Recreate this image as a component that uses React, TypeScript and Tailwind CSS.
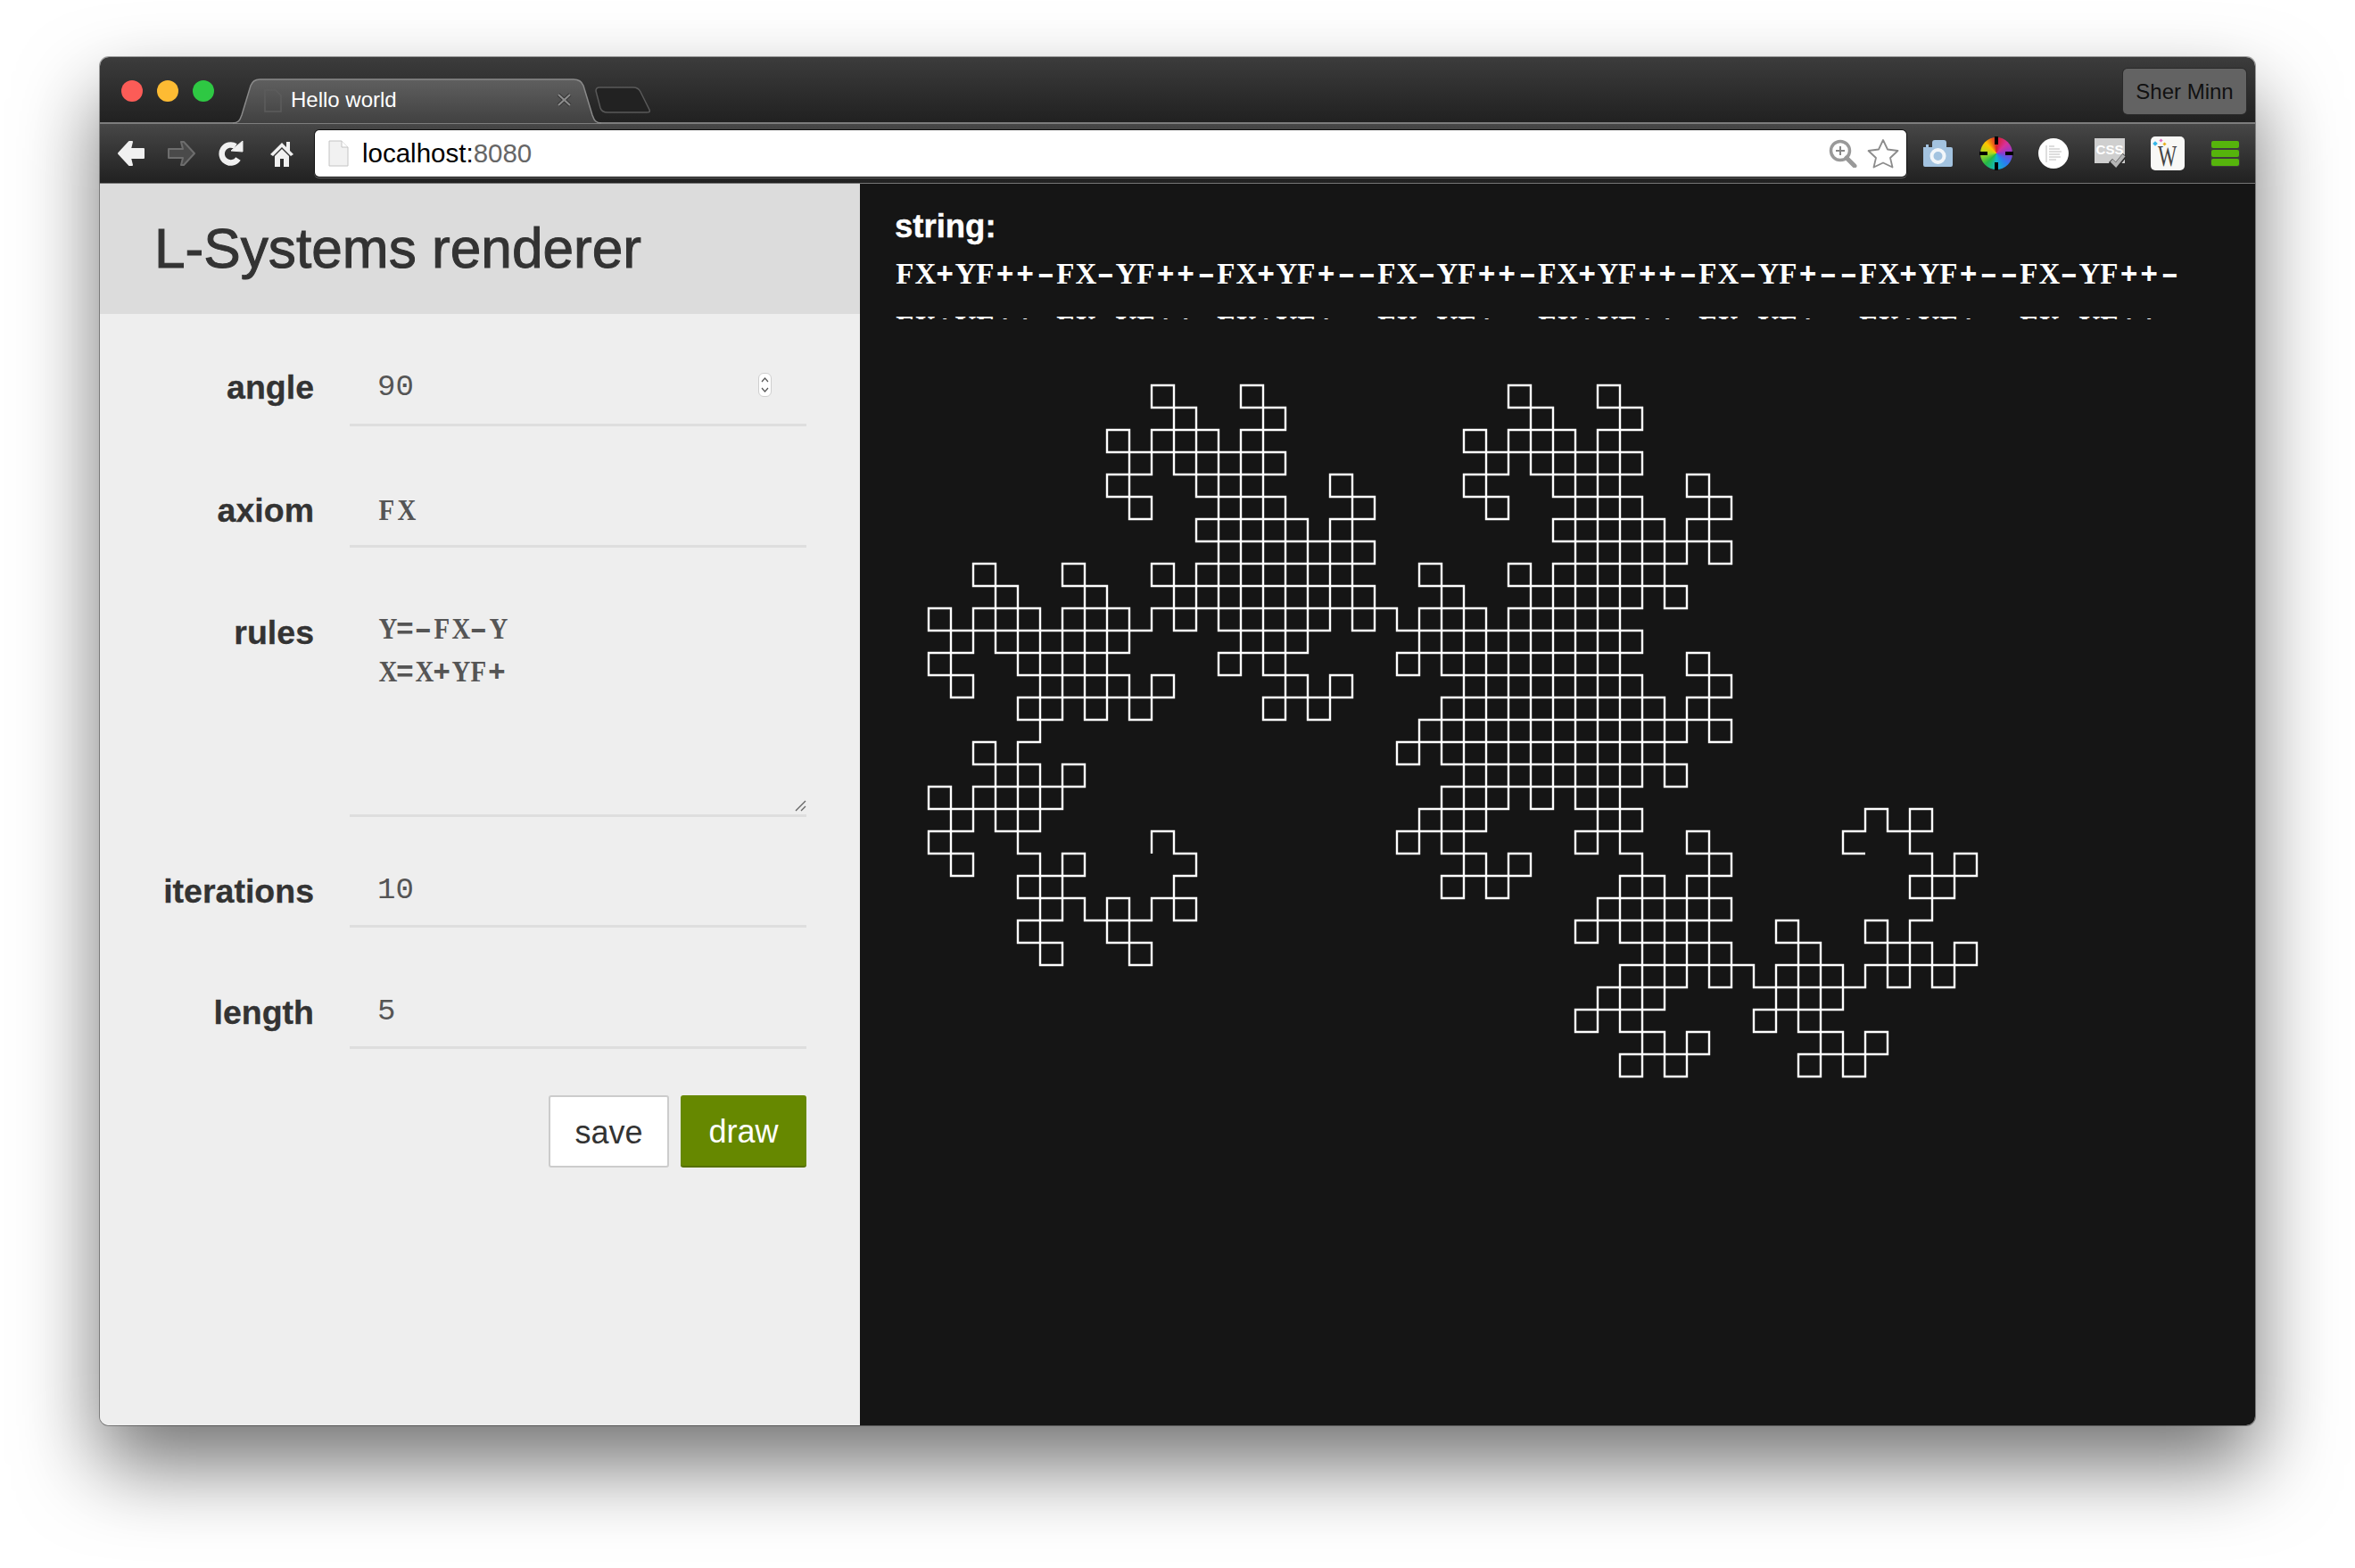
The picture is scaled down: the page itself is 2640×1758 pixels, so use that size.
import React from "react";

const SANS = "font-['Liberation_Sans',Arial,sans-serif]";
const SLAB = "font-['Liberation_Serif','Times_New_Roman',serif]";
const CODE = "font-['Liberation_Mono','Courier_New',monospace]";

function expand(iterations: number): string {
  let s = "FX";
  for (let i = 0; i < iterations; i++) {
    s = s.replace(/[XY]/g, (c) => (c === "X" ? "X+YF+" : "-FX-Y"));
  }
  return s;
}

const LSTRING = expand(10);
const CELL = 25;

function curve() {
  const dirs = [
    [1, 0],
    [0, 1],
    [-1, 0],
    [0, -1],
  ];
  // the turtle starts out pointing up
  let d = 3;
  let x = 0;
  let y = 0;
  const pts: [number, number][] = [[0, 0]];
  for (const c of LSTRING) {
    if (c === "F") {
      x += dirs[d][0] * CELL;
      y += dirs[d][1] * CELL;
      pts.push([x, y]);
    } else if (c === "+") d = (d + 1) % 4;
    else if (c === "-") d = (d + 3) % 4;
  }
  const xs = pts.map((p) => p[0]);
  const ys = pts.map((p) => p[1]);
  const minX = Math.min(...xs);
  const minY = Math.min(...ys);
  const w = Math.max(...xs) - minX;
  const h = Math.max(...ys) - minY;
  return {
    w,
    h,
    path: pts.map((p, i) => `${i ? "L" : "M"}${p[0] - minX + 2} ${p[1] - minY + 2}`).join(""),
  };
}

// one fixed-width cell per character, letters in the slab face, operators in the mono one
function Typed({ text, letterClass, opClass }: { text: string; letterClass: string; opClass: string }) {
  return (
    <>
      {text.split("").map((c, i) => (
        <span
          key={i}
          className={`inline-block text-center ${/[A-Z]/.test(c) ? letterClass : opClass} ${c === "-" ? "scale-x-[1.6]" : ""}`}
        >
          {c}
        </span>
      ))}
    </>
  );
}

function TrafficLights() {
  return (
    <div className="ml-[24px] mt-[26px] flex gap-[16px]">
      <span className="h-[24px] w-[24px] rounded-full bg-[#fc5c57]" />
      <span className="h-[24px] w-[24px] rounded-full bg-[#fdbb33]" />
      <span className="h-[24px] w-[24px] rounded-full bg-[#2ec843]" />
    </div>
  );
}

function Tab() {
  return (
    <div className="relative ml-[21px] mt-[24px] h-[51px] w-[413px]">
      <svg className="absolute inset-0" width="413" height="51" viewBox="0 0 413 51">
        <defs>
          <linearGradient id="tabfill" x1="0" y1="0" x2="0" y2="1">
            <stop offset="0" stopColor="#5f5f5f" />
            <stop offset="1" stopColor="#414141" />
          </linearGradient>
        </defs>
        <path
          d="M0 50C6 50 8 47 10 41L20 8C22 3 25 1 30 1H382C388 1 391 3 393 8L403 41C405 47 407 50 413 50Z"
          fill="url(#tabfill)"
        />
        <path
          d="M0 50C6 50 8 47 10 41L20 8C22 3 25 1 30 1H382C388 1 391 3 393 8L403 41C405 47 407 50 413 50"
          fill="none"
          stroke="#8a8a8a"
          strokeWidth="1.5"
        />
      </svg>
      <svg className="absolute left-[35px] top-[12px]" width="20" height="26" viewBox="0 0 20 26">
        <path d="M1 1H13L19 7V25H1Z" fill="none" stroke="#5c5c5c" strokeWidth="1.5" />
      </svg>
      <span className={`absolute left-[65px] top-[10px] text-[24px] leading-[28px] text-white ${SANS}`}>
        Hello world
      </span>
      <svg className="absolute left-[363px] top-[16px]" width="17" height="16" viewBox="0 0 17 16">
        <path d="M2 2L15 14M15 2L2 14" stroke="#333" strokeWidth="4" />
        <path d="M2 2L15 14M15 2L2 14" stroke="#8c8c8c" strokeWidth="2.2" />
      </svg>
    </div>
  );
}

function NavIcons() {
  return (
    <div className="ml-[19px] flex items-center">
      <svg width="32" height="30" viewBox="0 0 32 30">
        <path
          d="M2 15L14 2H17L15 10H30V20H15L17 28H14Z"
          fill="#f0f0f0"
          stroke="#f0f0f0"
          strokeWidth="2"
          strokeLinejoin="round"
        />
      </svg>
      <svg className="ml-[24px]" width="33" height="30" viewBox="0 0 33 30">
        <path
          d="M31 15L19 2H16L18 10H2V20H18L16 28H19Z"
          fill="#4a4a4a"
          stroke="#6d6d6d"
          strokeWidth="2"
          strokeLinejoin="round"
        />
      </svg>
      <svg className="ml-[25px]" width="28" height="30" viewBox="0 0 28 30">
        <path d="M22 21A10 10 0 1 1 19 7" fill="none" stroke="#f0f0f0" strokeWidth="6.5" />
        <path d="M14 12L27 13V1Z" fill="#f0f0f0" stroke="#f0f0f0" strokeLinejoin="round" />
      </svg>
      <svg className="ml-[30px]" width="26" height="30" viewBox="0 0 26 30">
        <path d="M0 16L13 3L18 8V2H22V12L26 16L23 18L13 8L3 18Z" fill="#f0f0f0" />
        <path d="M5 18L13 10L21 18V30H15V21H11V30H5Z" fill="#f0f0f0" />
      </svg>
    </div>
  );
}

function AddressBar() {
  return (
    <div className="ml-[24px] flex h-[52px] w-[1784px] items-center rounded-[5px] bg-white shadow-[0_0_0_1px_#111,0_1px_0_1px_#666]">
      <svg className="ml-[15px]" width="23" height="30" viewBox="0 0 23 30">
        <path d="M1 1H15L22 8V29H1Z" fill="#f1f1f1" stroke="#c4c4c4" strokeWidth="1" />
        <path d="M15 1V8H22" fill="#fff" stroke="#c4c4c4" strokeWidth="1" />
      </svg>
      <span className={`ml-[15px] text-[29.5px] leading-[34px] text-black ${SANS}`}>
        localhost:<span className="text-[#666]">8080</span>
      </span>
      <svg className="ml-auto" width="32" height="32" viewBox="0 0 32 32">
        <circle cx="13" cy="13" r="10.5" fill="none" stroke="#999" strokeWidth="3.5" />
        <path d="M20 21L29 30" stroke="#999" strokeWidth="5" strokeLinecap="round" />
        <path d="M13 8V18M8 13H18" stroke="#888" strokeWidth="2" />
      </svg>
      <svg className="ml-[11px] mr-[8px]" width="36" height="34" viewBox="0 0 36 34">
        <path
          d="M18 2L23 12.5L34.5 14L26 22L28.5 32.5L18 27.5L7.5 32.5L10 22L1.5 14L13 12.5Z"
          fill="#fff"
          stroke="#8c8c8c"
          strokeWidth="1.8"
          strokeLinejoin="round"
        />
      </svg>
    </div>
  );
}

function ExtensionIcons() {
  return (
    <div className="ml-[18px] flex items-center">
      <svg width="35" height="32" viewBox="0 0 35 32">
        <path
          d="M1 9H4V6H7V9H11V4Q11 1 14 1H24Q27 1 27 4V9H32Q34 9 34 11V29Q34 31 32 31H3Q1 31 1 29Z"
          fill="#a3c3e0"
        />
        <circle cx="17.5" cy="19" r="7" fill="#a3c3e0" stroke="#f2f6fa" strokeWidth="4" />
      </svg>
      <div className="relative ml-[30px] h-[36px] w-[36px] rounded-full bg-[conic-gradient(#d9202a,#d8309a,#8a3ad0,#2a7cf0,#10b8c8,#24b848,#a8dc20,#ffc400,#d9202a)]">
        <span className="absolute left-[16px] top-[-1px] h-[9px] w-[4px] bg-black" />
        <span className="absolute bottom-[-1px] left-[16px] h-[9px] w-[4px] bg-black" />
        <span className="absolute left-[-1px] top-[16px] h-[4px] w-[9px] bg-black" />
        <span className="absolute right-[-1px] top-[16px] h-[4px] w-[9px] bg-black" />
      </div>
      <svg className="ml-[29px]" width="34" height="34" viewBox="0 0 34 34">
        <circle cx="17" cy="17" r="17" fill="#fff" />
        <path d="M9 8V27M12 9H18M12 12H24M12 15H26M12 18H24M12 21H25M12 24H20" stroke="#bcbcbc" strokeWidth="1" />
      </svg>
      <div className="relative ml-[29px] h-[34px] w-[36px]">
        <div className="h-[28px] w-[34px] bg-[#cfcfcf] text-center">
          <span className={`text-[15px] font-bold leading-[26px] text-white ${SANS}`}>CSS</span>
        </div>
        <svg className="absolute bottom-0 right-0" width="20" height="18" viewBox="0 0 20 18">
          <path d="M2 9L8 15L18 3" fill="none" stroke="#2b2b2b" strokeWidth="6" />
          <path d="M3 9L8 14L17 3" fill="none" stroke="#b5b5b5" strokeWidth="4" />
        </svg>
      </div>
      <div
        className={`relative ml-[27px] flex h-[38px] w-[38px] items-center justify-center rounded-[5px] bg-[#f8f8f6] pt-[6px] text-[33px] leading-none text-[#444] ${SLAB}`}
      >
        <span className="inline-block scale-x-[0.68]">W</span>
        <span className="absolute left-[3px] top-[6px] h-[4px] w-[4px] rotate-45 bg-[#35b6e8]" />
        <span className="absolute left-[10px] top-[3px] h-[3px] w-[3px] rotate-45 bg-[#e070c0]" />
        <span className="absolute left-[14px] top-[7px] h-[3px] w-[3px] rotate-45 bg-[#e8b020]" />
      </div>
      <div className="ml-[29px] flex h-[30px] w-[33px] flex-col justify-between rounded-[3px] bg-[#3b3b3b] p-[1px]">
        <span className="h-[8px] rounded-[2px] bg-[#56b40c]" />
        <span className="h-[8px] rounded-[2px] bg-[#56b40c]" />
        <span className="h-[8px] rounded-[2px] bg-[#56b40c]" />
      </div>
    </div>
  );
}

function Field({
  label,
  rowClass,
  labelClass,
  valueClass,
  children,
}: {
  label: string;
  rowClass: string;
  labelClass: string;
  valueClass: string;
  children: React.ReactNode;
}) {
  return (
    <div className={`grid w-[792px] grid-cols-[240px_512px] gap-x-[40px] ${rowClass}`}>
      <div
        className={`text-right text-[37.5px] font-bold leading-[44px] text-[#333] [-webkit-text-stroke:0.3px_#333] ${SANS} ${labelClass}`}
      >
        {label}
      </div>
      <div className={`relative border-b-[3px] border-[#dedede] pl-[31px] ${valueClass}`}>{children}</div>
    </div>
  );
}

const VALUE_LETTER = `w-[20.6px] scale-x-[0.85] text-[34px] font-bold leading-[40px] text-[#555] ${SLAB}`;
const VALUE_OP = `w-[20.6px] text-[33px] font-bold leading-[40px] text-[#555] ${CODE}`;
const DIGITS = `text-[34px] leading-[40px] text-[#555] ${CODE}`;

function Sidebar() {
  return (
    <aside className="flex w-[852px] shrink-0 flex-col bg-[#eeeeee]">
      <header className="flex h-[146px] shrink-0 items-center bg-[#dcdcdc] pl-[61px]">
        <h1
          className={`text-[62.2px] font-normal leading-[70px] text-[#333] [-webkit-text-stroke:1px_#333] ${SANS}`}
        >
          L-Systems renderer
        </h1>
      </header>
      <Field label="angle" rowClass="mt-[60px] h-[66px]" labelClass="" valueClass="pt-[2px]">
        <span className={DIGITS}>90</span>
        <div className="absolute right-[39px] top-[6px] flex h-[27px] w-[15px] flex-col items-center justify-center rounded-[6px] border border-[#cfcfcf] bg-white">
          <svg width="9" height="19" viewBox="0 0 9 19">
            <path d="M1 6L4.5 2L8 6M1 13L4.5 17L8 13" fill="none" stroke="#555" strokeWidth="1.2" />
          </svg>
        </div>
      </Field>
      <Field label="axiom" rowClass="mt-[72px] h-[64px]" labelClass="" valueClass="pt-[2px]">
        <Typed text="FX" letterClass={VALUE_LETTER} opClass={VALUE_OP} />
      </Field>
      <Field label="rules" rowClass="mt-[68px] h-[234px]" labelClass="pt-[5px]" valueClass="pt-[3px]">
        <div className="h-[48px] leading-[48px]">
          <Typed text="Y=-FX-Y" letterClass={VALUE_LETTER} opClass={VALUE_OP} />
        </div>
        <div className="h-[48px] leading-[48px]">
          <Typed text="X=X+YF+" letterClass={VALUE_LETTER} opClass={VALUE_OP} />
        </div>
        <svg className="absolute bottom-[3px] right-[0px]" width="14" height="14" viewBox="0 0 14 14">
          <path d="M2 13L13 2M8 13L13 8" stroke="#666" strokeWidth="1.4" />
        </svg>
      </Field>
      <Field label="iterations" rowClass="mt-[61px] h-[63px]" labelClass="" valueClass="pt-[1px]">
        <span className={DIGITS}>10</span>
      </Field>
      <Field label="length" rowClass="mt-[73px] h-[63px]" labelClass="" valueClass="pt-[1px]">
        <span className={DIGITS}>5</span>
      </Field>
      <div className={`mt-[52px] flex w-[792px] justify-end gap-[13px] text-[36px] ${SANS}`}>
        <button className="h-[81px] w-[135px] rounded-[3px] border-2 border-[#cccccc] bg-white pt-[3px] text-[#333]">
          save
        </button>
        <button className="h-[81px] w-[141px] rounded-[3px] border-b-2 border-[#557000] bg-[#668800] pt-[3px] text-white">
          draw
        </button>
      </div>
    </aside>
  );
}

function Output() {
  const { w, h, path } = curve();
  return (
    <main className="min-w-0 flex-1 bg-[#151515] pl-[39px] pt-[26px]">
      <div className={`text-[36.5px] font-bold leading-[44px] text-white [-webkit-text-stroke:0.4px_#fff] ${SANS}`}>
        string:
      </div>
      <div className="mt-[4px] h-[78px] w-[1450px] overflow-hidden leading-[54px]">
        <Typed
          text={LSTRING.slice(0, 128)}
          letterClass={`w-[22.5px] text-[33px] font-bold leading-[54px] text-white ${SLAB}`}
          opClass={`w-[22.5px] text-[33px] font-bold leading-[54px] text-white ${CODE}`}
        />
      </div>
      <svg className="ml-[36px] mt-[72px]" width={w + 4} height={h + 4} viewBox={`0 0 ${w + 4} ${h + 4}`}>
        <path d={path} fill="none" stroke="#fff" strokeWidth="2.4" strokeLinejoin="miter" />
      </svg>
    </main>
  );
}

export default function App() {
  return (
    <div className="h-[1758px] w-[2640px] overflow-hidden bg-white pl-[112px] pt-[64px]">
      <div className="flex h-[1534px] w-[2416px] flex-col overflow-hidden rounded-[10px] shadow-[0_0_0_1px_rgba(0,0,0,0.35),0_45px_90px_rgba(0,0,0,0.55)]">
        <div className="flex h-[75px] shrink-0 items-start border-b-2 border-[#7d7d7d] bg-linear-to-b from-[#3c3c3c] to-[#212121]">
          <TrafficLights />
          <Tab />
          <svg className="ml-[-7px] mt-[33px]" width="62" height="30" viewBox="0 0 62 30">
            <path
              d="M1 5C1 2 2 1 5 1H43C47 1 49 2 51 6L61 26C62 29 60 29 58 29H14C9 29 7 27 6 24Z"
              fill="#222"
              stroke="#5a5a5a"
              strokeWidth="1.5"
            />
          </svg>
          <div
            className={`ml-auto mr-[10px] mt-[13px] flex h-[51px] w-[138px] items-center justify-center rounded-[5px] bg-[#636363] text-[24px] text-[#111] shadow-[0_0_0_1px_#2a2a2a] ${SANS}`}
          >
            Sher Minn
          </div>
        </div>
        <div className="flex h-[67px] shrink-0 items-center border-b-[1px] border-[#777] bg-linear-to-b from-[#474747] to-[#212121]">
          <NavIcons />
          <AddressBar />
          <ExtensionIcons />
        </div>
        <div className="flex min-h-0 flex-1">
          <Sidebar />
          <Output />
        </div>
      </div>
    </div>
  );
}
